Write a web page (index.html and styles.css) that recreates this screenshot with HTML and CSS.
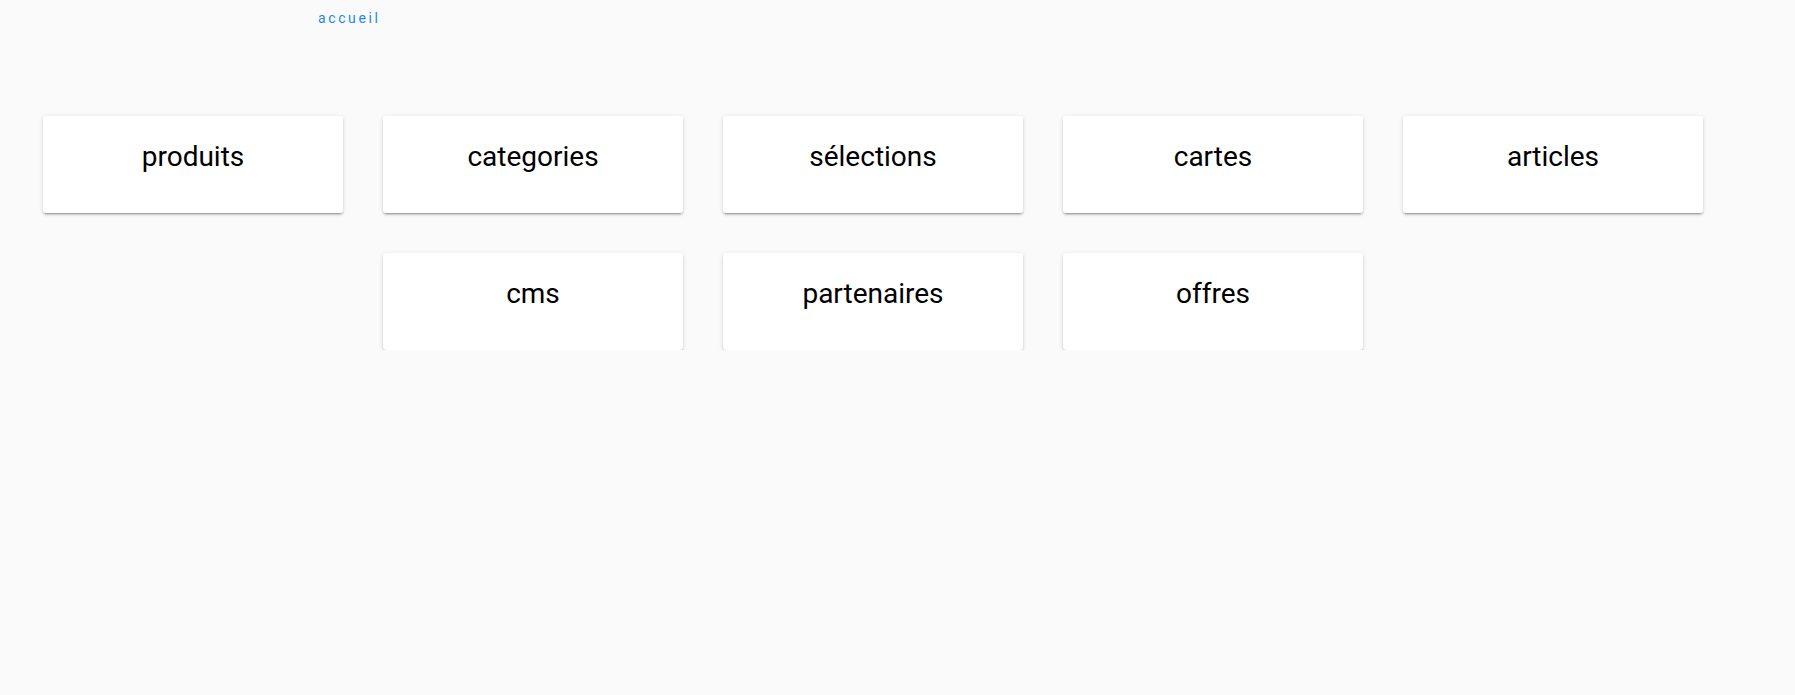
FILE: index.html
```html
<!DOCTYPE html>
<html lang="fr">
<head>
<meta charset="utf-8">
<title>accueil</title>
<link rel="stylesheet" href="styles.css">
</head>
<body>
<nav class="topbar"><a class="crumb" href="#">accueil</a></nav>
<main class="grid">
  <div class="card"><h2 class="card-title">produits</h2></div>
  <div class="card"><h2 class="card-title">categories</h2></div>
  <div class="card"><h2 class="card-title">sélections</h2></div>
  <div class="card"><h2 class="card-title">cartes</h2></div>
  <div class="card"><h2 class="card-title">articles</h2></div>
  <div class="card"><h2 class="card-title">cms</h2></div>
  <div class="card"><h2 class="card-title">partenaires</h2></div>
  <div class="card"><h2 class="card-title">offres</h2></div>
</main>
</body>
</html>
```
FILE: styles.css
```css
html, body {
  margin: 0;
  padding: 0;
  background: #fafafa;
  font-family: Roboto, "Liberation Sans", sans-serif;
}
.topbar {
  padding: 8px 0 0 318px;
  height: 28px;
}
.crumb {
  color: #1e88e5;
  font-size: 14px;
  letter-spacing: 2.6px;
  text-decoration: none;
  line-height: 18px;
}
.grid {
  display: flex;
  flex-wrap: wrap;
  justify-content: center;
  width: 1700px;
  margin: 80px 0 0 23px;
  row-gap: 40px;
}
.card {
  width: 300px;
  height: 97px;
  margin: 0 20px;
  background: #fff;
  border-radius: 3px;
  box-shadow: 0 2px 2px 0 rgba(0,0,0,0.14), 0 3px 1px -2px rgba(0,0,0,0.2), 0 1px 5px 0 rgba(0,0,0,0.12);
  box-sizing: border-box;
  padding-top: 23px;
  text-align: center;
}
.card-title {
  margin: 0;
  font-size: 28px;
  font-weight: 400;
  line-height: 36px;
  color: #000;
}
```
